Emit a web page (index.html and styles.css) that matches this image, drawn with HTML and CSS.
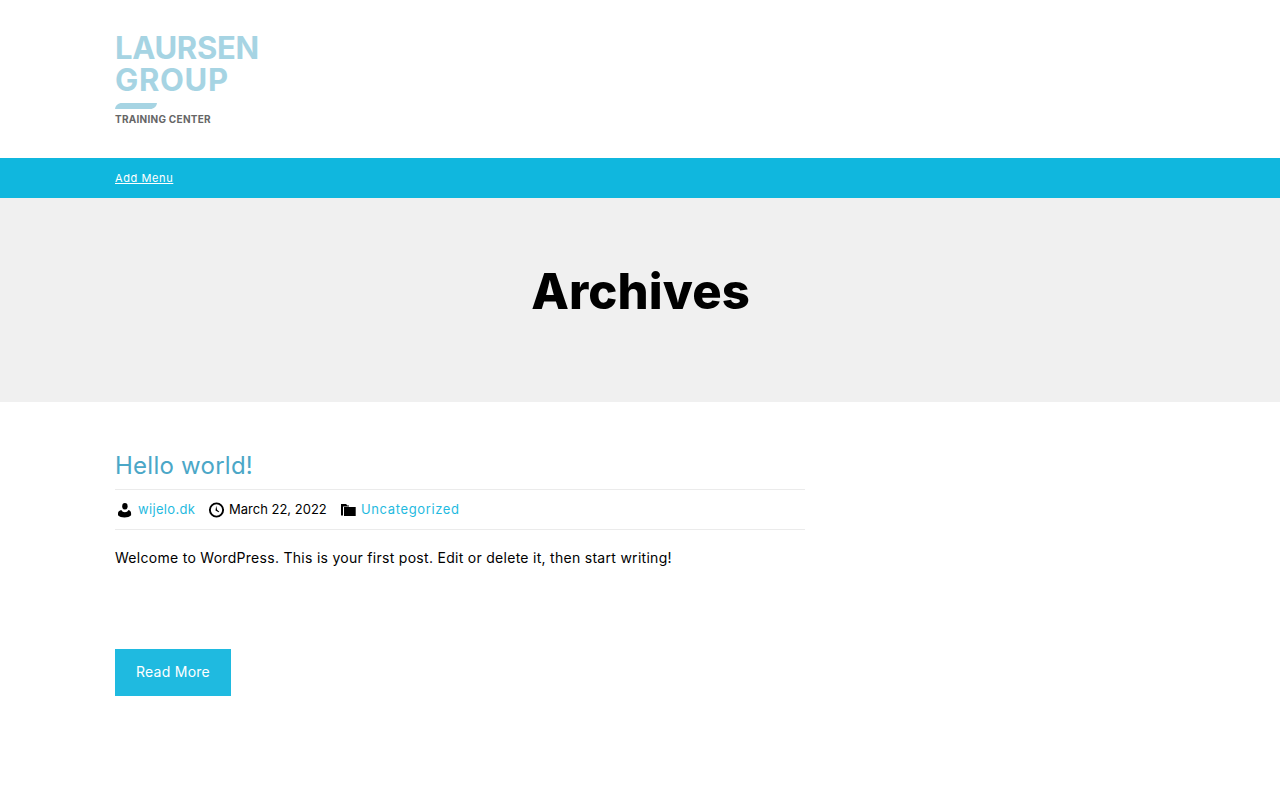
FILE: index.html
```
<!DOCTYPE html>
<html lang="en">
<head>
    <meta charset="UTF-8">
    <meta name="viewport" content="width=device-width, initial-scale=1.0">
    <title>Archives</title>
    <link rel="stylesheet" href="styles.css">
</head>
<body>
    <header class="site-header">
        <div class="container">
            <a href="#" class="logo">
                <span class="logo-name">LAURSEN<br><span class="logo-second">GROUP</span></span>
                <svg class="logo-bar" width="42" height="6" viewBox="0 0 42 6"><path d="M0 6C.5 2.500 3 0 7 0H42C41.500 3.500 39 6 35 6Z"/></svg>
                <span class="logo-tagline">TRAINING CENTER</span>
            </a>
        </div>
    </header>
    <nav class="main-nav">
        <div class="container">
            <a href="#">Add Menu</a>
        </div>
    </nav>
    <section class="page-title">
        <h1>Archives</h1>
    </section>
    <main class="container">
        <article class="post">
            <h2><a href="#">Hello world!</a></h2>
            <div class="post-meta">
                <span class="meta-item author">
                    <svg width="19" height="20" viewBox="0 0 19 20"><ellipse cx="9.900" cy="6.300" rx="2.700" ry="3.300"/><path d="M6.300 10.100C7.200 11.500 8.300 12.300 9.900 12.300S12.600 11.500 13.500 10.100C15.200 10.600 16.100 11.700 16.100 13.400V15.200C14.500 16.700 12.400 17.400 9.500 17.400S4.500 16.700 3 15.200V13.400C3 11.700 4.500 10.500 6.300 10.100Z"/></svg>
                    <a href="#">wijelo.dk</a>
                </span>
                <span class="meta-item date">
                    <svg width="19" height="20" viewBox="0 0 19 20"><circle cx="9.500" cy="10" r="6.600" fill="none" stroke="#000" stroke-width="1.900"/><path d="M9.200 5.800L10.100 9.700L12.300 11.700L11.600 12.300L8.500 10.400Z"/></svg>
                    <span>March 22, 2022</span>
                </span>
                <span class="meta-item category">
                    <svg width="19" height="20" viewBox="0 0 19 20"><path d="M2 4H7L8.500 5.500H10V6.500H4V15.500H2Z"/><path d="M5 7H16.700V16H5Z"/></svg>
                    <a href="#">Uncategorized</a>
                </span>
            </div>
            <p>Welcome to WordPress. This is your first post. Edit or delete it, then start writing!</p>
            <a href="#" class="read-more">Read More</a>
        </article>
    </main>
</body>
</html>
```
FILE: styles.css
```
:root {
    --primary-color: #10b7de;
    --link-color: #1fbae0;
    --logo-color: #a6d4e3;
}
* {
    box-sizing: border-box;
}
body {
    margin: 0;
    font-family: Inter, "Open Sans", sans-serif;
    font-size: 14px;
    color: #000000;
    background: #ffffff;
}
a {
    color: var(--link-color);
    text-decoration: none;
}
.container {
    width: 1050px;
    margin: 0 auto;
}
.site-header {
    height: 158px;
    padding-top: 32px;
}
.logo {
    display: flex;
    flex-direction: column;
    align-items: flex-start;
    color: var(--logo-color);
}
.logo-name {
    font-size: 31px;
    line-height: 32px;
    font-weight: 700;
    letter-spacing: -0.3px;
    white-space: nowrap;
}
.logo-second {
    letter-spacing: 0.7px;
}
.logo-bar {
    margin-top: 7px;
    fill: var(--logo-color);
}
.logo-tagline {
    margin-top: 3px;
    font-size: 10px;
    line-height: 14px;
    font-weight: 700;
    letter-spacing: 0.27px;
    color: #666666;
    white-space: nowrap;
}
.main-nav {
    height: 40px;
    background: var(--primary-color);
    line-height: 38px;
}
.main-nav a {
    color: #ffffff;
    font-size: 11px;
    letter-spacing: 0.6px;
    text-decoration: underline;
}
.page-title {
    height: 204px;
    padding-top: 59px;
    background: #f0f0f0;
    text-align: center;
}
.page-title h1 {
    margin: 0;
    padding-left: 1px;
    font-size: 49px;
    line-height: 70px;
    font-weight: 800;
    letter-spacing: 0.1px;
}
.post {
    width: 690px;
    padding-top: 44px;
}
.post h2 {
    margin: 0;
    height: 43px;
    font-size: 24px;
    line-height: 40px;
    font-weight: 400;
    letter-spacing: 0.25px;
}
.post h2 a {
    color: #4ba7c7;
}
.post-meta {
    display: flex;
    height: 41px;
    border-top: 1px solid #ebebeb;
    border-bottom: 1px solid #ebebeb;
    font-size: 13px;
    line-height: 39px;
    white-space: nowrap;
}
.meta-item {
    display: flex;
    align-items: center;
    gap: 4px;
}
.author {
    width: 92px;
    letter-spacing: 0.33px;
}
.date {
    width: 132px;
    gap: 3px;
}
.category {
    gap: 3px;
    letter-spacing: 0.63px;
}
.post p {
    margin: 16px 0 79px;
    line-height: 24px;
    letter-spacing: 0.285px;
    white-space: nowrap;
}
.read-more {
    display: flex;
    align-items: center;
    justify-content: center;
    width: 116px;
    height: 47px;
    padding-bottom: 2px;
    background: var(--link-color);
    color: #ffffff;
    letter-spacing: 0.25px;
}
```
